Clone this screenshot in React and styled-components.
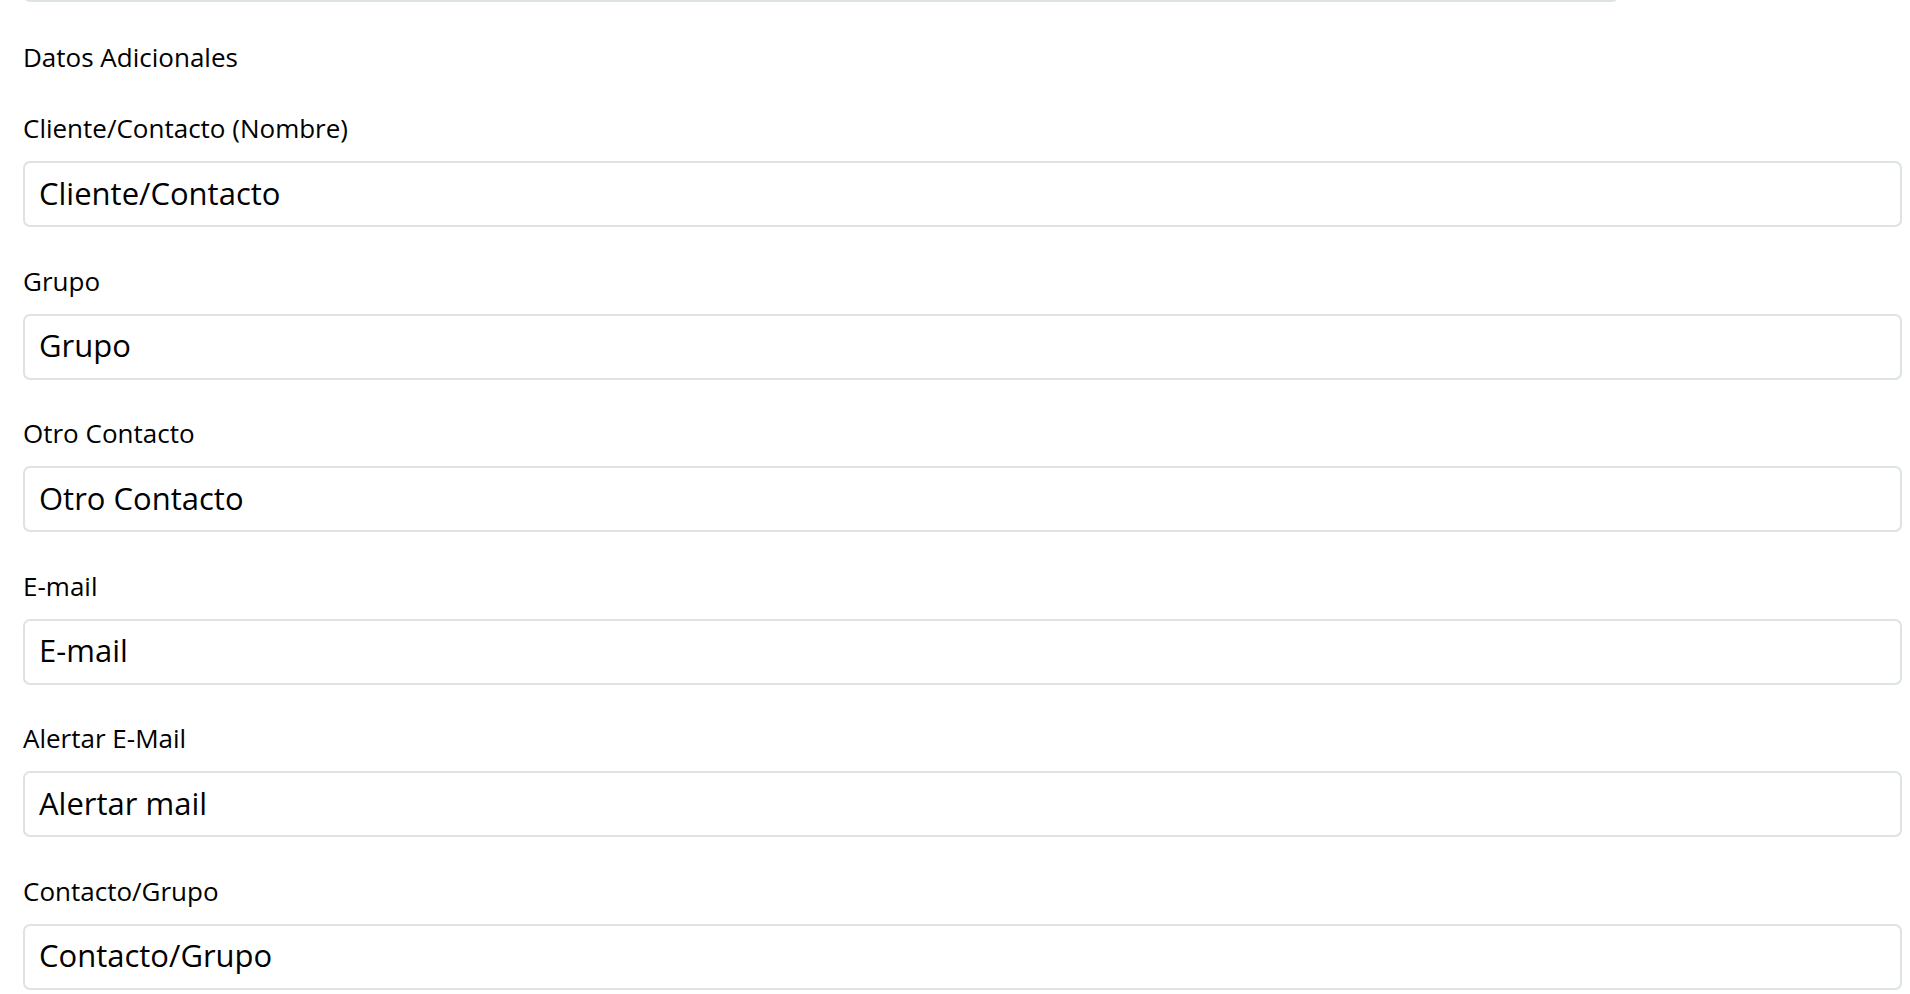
import React from 'react';
import styled, { createGlobalStyle } from 'styled-components';

// Reset and base font
const GlobalStyle = createGlobalStyle`
  * {
    margin: 0;
    padding: 0;
    box-sizing: border-box;
  }

  html, body {
    background: #ffffff;
    overflow: hidden;
    font-family: "Open Sans", "Liberation Sans", sans-serif;
  }
`;

const fields = [
  { label: 'Cliente/Contacto (Nombre)', placeholder: 'Cliente/Contacto' },
  { label: 'Grupo', placeholder: 'Grupo' },
  { label: 'Otro Contacto', placeholder: 'Otro Contacto' },
  { label: 'E-mail', placeholder: 'E-mail' },
  { label: 'Alertar E-Mail', placeholder: 'Alertar mail' },
  { label: 'Contacto/Grupo', placeholder: 'Contacto/Grupo' },
];

const App = () => {
  return (
    <>
      <GlobalStyle />
      <Form>
        {/* tail of the previous section, scrolled mostly out of view */}
        <PrevInput type="text" readOnly />
        <SectionTitle>Datos Adicionales</SectionTitle>
        <FieldList>
          {fields.map((f) => (
            <Field key={f.label}>
              <Label>{f.label}</Label>
              <Input type="text" placeholder={f.placeholder} />
            </Field>
          ))}
        </FieldList>
      </Form>
    </>
  );
};

// Styled components

const Form = styled.div`
  display: flex;
  flex-direction: column;
  padding: 0 8px 0 23px;
  width: 100%;
`;

const PrevInput = styled.input`
  width: 1596px;
  height: 66px;
  margin-top: -64px;
  border: 2px solid #dde3e3;
  border-radius: 7px;
  background: #fff;
  outline: none;
`;

const SectionTitle = styled.h3`
  margin-top: 40px;
  font-size: 26px;
  font-weight: 400;
  line-height: 30px;
  color: #000;
`;

const FieldList = styled.div`
  display: flex;
  flex-direction: column;
  gap: 38.5px;
  margin-top: 41px;
`;

const Field = styled.div`
  display: flex;
  flex-direction: column;
  gap: 18px;
`;

const Label = styled.label`
  font-size: 26px;
  font-weight: 400;
  line-height: 30px;
  color: #000;
`;

const Input = styled.input`
  width: 100%;
  height: 66px;
  padding: 0 14px 3px;
  border: 2px solid #dde3e3;
  border-radius: 7px;
  background: #fff;
  font-family: inherit;
  font-size: 31px;
  color: #000;
  outline: none;

  &::placeholder {
    color: #000;
    opacity: 1;
  }
`;

export default App;
